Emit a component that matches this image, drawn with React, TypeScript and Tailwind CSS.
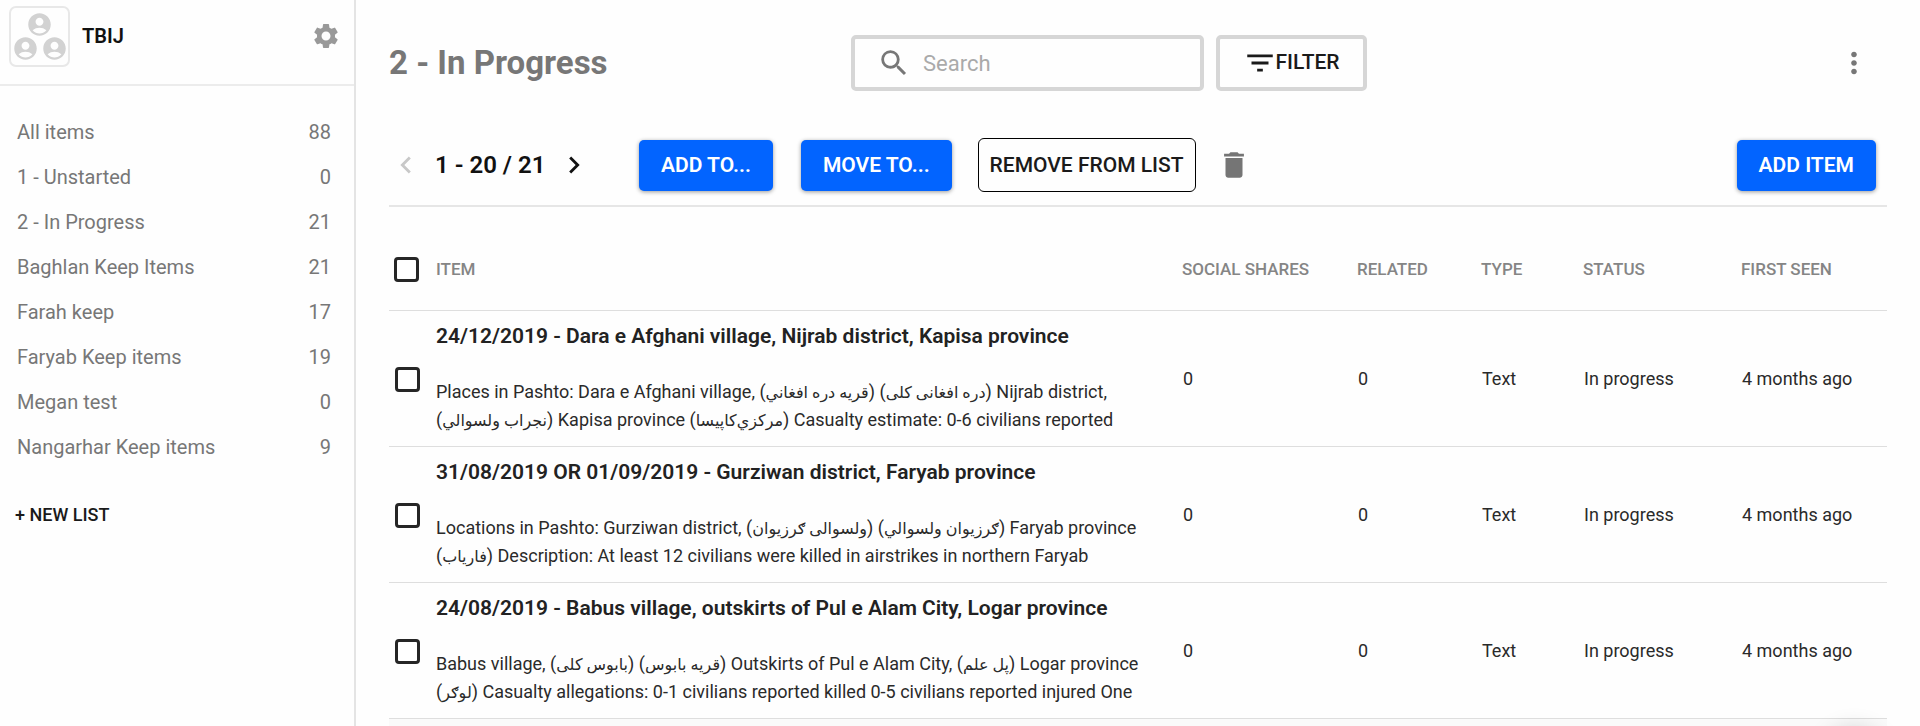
import type { ReactNode } from "react";
import {
  MdAccountCircle,
  MdChevronLeft,
  MdChevronRight,
  MdDelete,
  MdFilterList,
  MdMoreVert,
  MdSearch,
  MdSettings,
} from "react-icons/md";

const lists = [
  { name: "All items", count: 88 },
  { name: "1 - Unstarted", count: 0 },
  { name: "2 - In Progress", count: 21 },
  { name: "Baghlan Keep Items", count: 21 },
  { name: "Farah keep", count: 17 },
  { name: "Faryab Keep items", count: 19 },
  { name: "Megan test", count: 0 },
  { name: "Nangarhar Keep items", count: 9 },
];

type Item = {
  title: string;
  description: ReactNode;
};

function Pashto({ children }: { children: string }) {
  return (
    <>
      (
      <bdi lang="ps" dir="rtl" className="text-[16px] leading-none">
        {children}
      </bdi>
      )
    </>
  );
}

const items: Item[] = [
  {
    title: "24/12/2019 - Dara e Afghani village, Nijrab district, Kapisa province",
    description: (
      <>
        Places in Pashto: Dara e Afghani village, <Pashto>قریه دره افغاني</Pashto>{" "}
        <Pashto>دره افغانی کلی</Pashto> Nijrab district,
        <br />
        <Pashto>نجراب ولسوالي</Pashto> Kapisa province <Pashto>مرکزي‌کاپیسا</Pashto> Casualty
        estimate: 0-6 civilians reported
      </>
    ),
  },
  {
    title: "31/08/2019 OR 01/09/2019 - Gurziwan district, Faryab province",
    description: (
      <>
        Locations in Pashto: Gurziwan district, <Pashto>ولسوالی ګرزیوان</Pashto>{" "}
        <Pashto>ګرزیوان ولسوالي</Pashto> Faryab province
        <br />
        <Pashto>فاریاب</Pashto> Description: At least 12 civilians were killed in airstrikes in
        northern Faryab
      </>
    ),
  },
  {
    title: "24/08/2019 - Babus village, outskirts of Pul e Alam City, Logar province",
    description: (
      <>
        Babus village, <Pashto>بابوس کلی</Pashto> <Pashto>قریه بابوس</Pashto> Outskirts of Pul e
        Alam City, <Pashto>پل علم</Pashto> Logar province
        <br />
        <Pashto>لوګر</Pashto> Casualty allegations: 0-1 civilians reported killed 0-5 civilians
        reported injured One
      </>
    ),
  },
];

function Checkbox({ label }: { label: string }) {
  return (
    <input
      type="checkbox"
      aria-label={label}
      className="block size-[25px] appearance-none rounded-[4px] border-[3px] border-[#262626] bg-white checked:bg-[#262626]"
    />
  );
}

function PrimaryButton({ children }: { children: ReactNode }) {
  return (
    <button
      type="button"
      className="h-[51px] rounded-[5px] bg-[#0264ff] px-[22px] pt-[2px] text-[21px] font-semibold whitespace-nowrap text-white shadow-[0_1px_4px_rgba(0,0,0,0.4)]"
    >
      {children}
    </button>
  );
}

function Sidebar() {
  return (
    <aside className="w-[356px] shrink-0 border-r-2 border-[#e4e4e4]">
      <header className="flex h-[86px] items-start border-b-2 border-[#ececec] pt-[6px] pr-[13px] pl-[9px]">
        <div className="flex size-[61px] flex-col items-center justify-center rounded-[7px] border-2 border-[#e8e8e8] text-[#d2d2d2]">
          <MdAccountCircle className="-mb-[3px] size-[27px]" />
          <div className="flex gap-[2px]">
            <MdAccountCircle className="size-[27px]" />
            <MdAccountCircle className="size-[27px]" />
          </div>
        </div>
        <span className="ml-3 flex h-[60px] items-center text-[20px] font-semibold text-[#111]">
          TBIJ
        </span>
        <button
          type="button"
          aria-label="Settings"
          className="ml-auto flex h-[60px] items-center text-[#999]"
        >
          <MdSettings className="size-[30px]" />
        </button>
      </header>
      <nav className="pt-[23px]">
        <ul>
          {lists.map((list) => (
            <li key={list.name}>
              <a
                href="#"
                className="flex h-[45px] items-center justify-between pr-[23px] pl-[17px] text-[20px] text-[#777]"
              >
                <span>{list.name}</span>
                <span>{list.count}</span>
              </a>
            </li>
          ))}
        </ul>
        <button
          type="button"
          className="mt-[34px] block h-6 pl-[15px] text-[18px] leading-6 font-medium text-[#1a1a1a]"
        >
          + NEW LIST
        </button>
      </nav>
    </aside>
  );
}

function Header() {
  return (
    <header className="flex h-[56px] items-center">
      <h1 className="w-[462px] shrink-0 text-[33px] font-bold whitespace-nowrap text-[#777]">
        2 - In Progress
      </h1>
      <label className="flex h-full w-[353px] items-center rounded-[5px] border-4 border-[#d6d6d6] pl-[22px] text-[#777]">
        <MdSearch className="size-[34px] shrink-0" />
        <input
          type="text"
          placeholder="Search"
          aria-label="Search"
          className="ml-3 w-full min-w-0 bg-transparent text-[22px] text-[#222] outline-none placeholder:text-[#aaa]"
        />
      </label>
      <button
        type="button"
        className="ml-3 flex h-full w-[151px] items-center justify-center rounded-[5px] border-4 border-[#d6d6d6] text-[21px] font-medium text-[#1a1a1a]"
      >
        <MdFilterList className="-mr-[2px] size-[34px]" />
        FILTER
      </button>
      <button type="button" aria-label="More actions" className="mr-4 ml-auto text-[#777]">
        <MdMoreVert className="size-[34px]" />
      </button>
    </header>
  );
}

function Toolbar() {
  return (
    <div className="mt-[47px] flex h-[69px] items-start border-b-2 border-[#e6e6e6]">
      <div className="flex h-[54px] w-[250px] shrink-0 items-center">
        <button type="button" aria-label="Previous page" className="text-[#c8c8c8]">
          <MdChevronLeft className="size-[34px]" />
        </button>
        <span className="mx-3 text-[24px] font-semibold whitespace-nowrap text-[#111]">
          1 - 20 / 21
        </span>
        <button type="button" aria-label="Next page" className="text-[#111]">
          <MdChevronRight className="size-[34px]" />
        </button>
      </div>
      <div className="flex h-[54px] flex-1 items-center">
        <PrimaryButton>ADD TO...</PrimaryButton>
        <div className="ml-7">
          <PrimaryButton>MOVE TO...</PrimaryButton>
        </div>
        <button
          type="button"
          className="ml-[26px] h-[54px] rounded-[6px] border border-black px-[11px] pt-[2px] text-[21px] font-medium whitespace-nowrap text-[#1a1a1a]"
        >
          REMOVE FROM LIST
        </button>
        <button type="button" aria-label="Delete" className="ml-[21px] text-[#757575]">
          <MdDelete className="size-[34px]" />
        </button>
        <div className="mr-[11px] ml-auto">
          <PrimaryButton>ADD ITEM</PrimaryButton>
        </div>
      </div>
    </div>
  );
}

function ItemTable() {
  return (
    <table className="w-full table-fixed border-collapse text-left">
      <colgroup>
        <col className="w-[47px]" />
        <col />
        <col className="w-[175px]" />
        <col className="w-[124px]" />
        <col className="w-[102px]" />
        <col className="w-[158px]" />
        <col className="w-[146px]" />
      </colgroup>
      <thead>
        <tr className="h-[103px] border-b border-[#dedede] text-[17px] text-[#858585]">
          <th className="pt-[22px] pl-[5px]">
            <Checkbox label="Select all items" />
          </th>
          <th className="pt-[22px] font-medium">ITEM</th>
          <th className="pt-[22px] font-medium">SOCIAL SHARES</th>
          <th className="pt-[22px] font-medium">RELATED</th>
          <th className="pt-[22px] font-medium">TYPE</th>
          <th className="pt-[22px] font-medium">STATUS</th>
          <th className="pt-[22px] font-medium">FIRST SEEN</th>
        </tr>
      </thead>
      <tbody>
        {items.map((item) => (
          <tr
            key={item.title}
            className="h-[136px] border-b border-[#dedede] text-[18px] text-[#2a2a2a]"
          >
            <td className="pt-[2px] pl-[6px]">
              <Checkbox label={item.title} />
            </td>
            <td className="pt-[11px] pb-3 align-top">
              <h2 className="text-[21px] leading-7 font-semibold whitespace-nowrap text-[#222]">
                {item.title}
              </h2>
              <p className="mt-7 text-[18px] leading-7 whitespace-nowrap">{item.description}</p>
            </td>
            <td className="pl-px">0</td>
            <td className="pl-px">0</td>
            <td className="pl-px">Text</td>
            <td className="pl-px">In progress</td>
            <td className="pl-px">4 months ago</td>
          </tr>
        ))}
      </tbody>
    </table>
  );
}

export default function App() {
  return (
    <div className="flex h-screen overflow-hidden bg-[#fefefe] font-[Roboto,'DejaVu_Sans',sans-serif]">
      <Sidebar />
      <main className="min-w-0 flex-1 pt-[35px] pr-[33px] pl-[33px]">
        <Header />
        <Toolbar />
        <ItemTable />
        <div className="h-4 bg-[#fafafa]" />
      </main>
      <div className="fixed right-[38px] -bottom-[60px] size-[56px] rounded-full shadow-[0_0_24px_rgba(0,0,0,0.2)]" />
    </div>
  );
}
